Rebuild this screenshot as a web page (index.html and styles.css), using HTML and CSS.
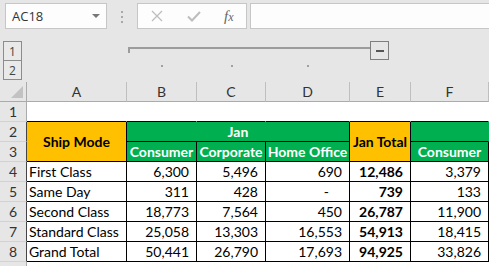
FILE: index.html
```html
<!DOCTYPE html>
<html lang="en">
<head>
<meta charset="UTF-8" />
<meta name="viewport" content="width=device-width, initial-scale=1" />
<title>Ship Mode by Segment</title>
<link rel="stylesheet" href="styles.css">
</head>
<body>
<div class="excel">
  <div class="formula-bar">
    <div class="name-box">AC18<span class="caret"></span></div>
    <div class="grip"><i></i><i></i><i></i></div>
    <div class="fx-buttons">
      <svg class="cancel" width="12" height="12" viewBox="0 0 12 12"><path d="M1 1 L11 11 M11 1 L1 11" /></svg>
      <svg class="enter" width="14" height="11" viewBox="0 0 14 11"><path d="M1 5.5 L5 9.5 L13 1" /></svg>
      <span class="fx"><i>f</i><i>x</i></span>
    </div>
    <div class="formula-input"></div>
  </div>

  <div class="outline">
    <div class="levels">
      <button>1</button>
      <button>2</button>
    </div>
    <div class="group-bar">
      <span class="group-line"></span>
      <span class="collapse"></span>
    </div>
    <span class="dot col-b"></span>
    <span class="dot col-c"></span>
    <span class="dot col-d"></span>
  </div>

  <div class="sheet">
    <!-- column headers -->
    <div class="corner"><span class="select-all"></span></div>
    <div class="ch">A</div>
    <div class="ch">B</div>
    <div class="ch">C</div>
    <div class="ch">D</div>
    <div class="ch">E</div>
    <div class="ch">F</div>

    <!-- row 1 -->
    <div class="rh">1</div>
    <div class="cell edge"></div>
    <div class="cell edge"></div>
    <div class="cell edge"></div>
    <div class="cell edge"></div>
    <div class="cell edge"></div>
    <div class="cell edge"></div>

    <!-- rows 2-3: headers -->
    <div class="rh in-table">2</div>
    <div class="cell t hdr gold span-rows">Ship Mode</div>
    <div class="cell t hdr green span-three">Jan</div>
    <div class="cell t hdr gold span-rows">Jan Total</div>
    <div class="cell t hdr green open"></div>

    <div class="rh in-table">3</div>
    <div class="cell t hdr green">Consumer</div>
    <div class="cell t hdr green">Corporate</div>
    <div class="cell t hdr green">Home Office</div>
    <div class="cell t hdr green">Consumer</div>

    <!-- data -->
    <div class="rh in-table">4</div>
    <div class="cell t">First Class</div>
    <div class="cell t num">6,300</div>
    <div class="cell t num">5,496</div>
    <div class="cell t num">690</div>
    <div class="cell t num bold">12,486</div>
    <div class="cell t num">3,379</div>

    <div class="rh in-table">5</div>
    <div class="cell t">Same Day</div>
    <div class="cell t num">311</div>
    <div class="cell t num">428</div>
    <div class="cell t num dash">-</div>
    <div class="cell t num bold">739</div>
    <div class="cell t num">133</div>

    <div class="rh in-table">6</div>
    <div class="cell t">Second Class</div>
    <div class="cell t num">18,773</div>
    <div class="cell t num">7,564</div>
    <div class="cell t num">450</div>
    <div class="cell t num bold">26,787</div>
    <div class="cell t num">11,900</div>

    <div class="rh in-table">7</div>
    <div class="cell t">Standard Class</div>
    <div class="cell t num">25,058</div>
    <div class="cell t num">13,303</div>
    <div class="cell t num">16,553</div>
    <div class="cell t num bold">54,913</div>
    <div class="cell t num">18,415</div>

    <div class="rh in-table">8</div>
    <div class="cell t">Grand Total</div>
    <div class="cell t num">50,441</div>
    <div class="cell t num">26,790</div>
    <div class="cell t num">17,693</div>
    <div class="cell t num bold">94,925</div>
    <div class="cell t num">33,826</div>

    <div class="rh"></div>
    <div class="cell"></div>
    <div class="cell"></div>
    <div class="cell"></div>
    <div class="cell"></div>
    <div class="cell"></div>
    <div class="cell"></div>
  </div>
</div>
</body>
</html>
```

FILE: styles.css
```css
:root {
  --chrome-bg: #e6e6e6;
  --box-border: #c6c6c6;
  --header-line: #bfbfbf;
  --header-edge: #ababab;
  --gold: #ffc000;
  --green: #00b050;
  --cell-font: Lato, 'Liberation Sans', sans-serif;
  --ui-font: 'Open Sans', 'Noto Sans', sans-serif;
}

* {
  box-sizing: border-box;
}

html,
body {
  margin: 0;
  overflow: hidden;
}

body {
  background: var(--chrome-bg);
  font-family: var(--cell-font);
  color: #000;
}

.excel {
  width: 489px;
  height: 266px;
  overflow: hidden;
}

/* formula bar */

.formula-bar {
  display: flex;
  align-items: flex-start;
  height: 31px;
  padding: 3px 0 0 5px;
}

.name-box {
  display: flex;
  align-items: center;
  width: 102px;
  height: 26px;
  padding-left: 6px;
  background: #fdfdfd;
  border: 1px solid var(--box-border);
  font-family: var(--ui-font);
  font-size: 13px;
  color: #333;
}

.caret {
  margin-left: auto;
  margin-right: 6px;
  width: 0;
  height: 0;
  border-left: 4px solid transparent;
  border-right: 4px solid transparent;
  border-top: 4px solid #777;
}

.grip {
  display: flex;
  flex-direction: column;
  gap: 3px;
  margin: 8px 14px 0 14px;
}

.grip i {
  display: block;
  width: 2px;
  height: 2px;
  background: #a8a8a8;
}

.fx-buttons {
  display: flex;
  align-items: center;
  width: 110px;
  height: 26px;
  padding-left: 13px;
  background: #fdfdfd;
  border: 1px solid var(--box-border);
}

.fx-buttons svg {
  fill: none;
  stroke: #bdbdbd;
}

.cancel {
  stroke-width: 1.3;
}

.enter {
  margin-left: 24px;
  stroke-width: 2;
}

.fx {
  margin-left: 23px;
  font-family: 'Liberation Serif', serif;
  font-size: 15px;
  color: #666;
}

.fx i + i {
  font-size: 12px;
}

.formula-input {
  flex: 1;
  height: 26px;
  margin: 0 -2px 0 3px;
  background: #fdfdfd;
  border: 1px solid var(--box-border);
}

/* outline groups */

.outline {
  display: grid;
  grid-template-columns: 27px 100px 70px 69px 84px 61px 78px;
  grid-template-rows: 30px 21px;
  height: 51px;
}

.levels {
  grid-row: 1 / 3;
  display: flex;
  flex-direction: column;
  padding: 10px 0 0 3px;
}

.levels button {
  width: 19px;
  height: 20px;
  margin: 0;
  padding: 0;
  background: #e9e9e9;
  border: 1px solid #8c8c8c;
  font-family: var(--ui-font);
  font-size: 12px;
  color: #444;
  line-height: 17px;
}

.levels button + button {
  margin-top: -1px;
}

.group-bar {
  grid-column: 3 / 7;
  display: flex;
  align-items: flex-start;
  margin: 10px 22px 0 1px;
}

.group-line {
  flex: 1;
  height: 6px;
  margin-top: 6px;
  border-top: 2px solid #9c9c9c;
  border-left: 2px solid #9c9c9c;
}

.collapse {
  position: relative;
  width: 19px;
  height: 19px;
  border: 1px solid #7f7f7f;
}

.collapse::after {
  content: '';
  position: absolute;
  left: 5px;
  top: 8px;
  width: 8px;
  height: 2px;
  background: #555;
}

.dot {
  grid-row: 2;
  justify-self: center;
  width: 2px;
  height: 2px;
  margin-top: 4px;
  background: #a0a0a0;
}

.col-b { grid-column: 3; }
.col-c { grid-column: 4; }
.col-d { grid-column: 5; }

/* sheet */

.sheet {
  display: grid;
  grid-template-columns: 27px 100px 70px 69px 84px 61px 78px;
  grid-auto-rows: 20px;
  font-size: 14px;
}

.corner,
.ch,
.rh {
  display: flex;
  align-items: center;
  justify-content: center;
  background: var(--chrome-bg);
  color: #333;
}

.corner {
  position: relative;
  border-right: 1px solid var(--header-edge);
  border-bottom: 1px solid var(--header-edge);
}

.select-all {
  position: absolute;
  right: 3px;
  bottom: 3px;
  width: 0;
  height: 0;
  border-left: 12px solid transparent;
  border-bottom: 12px solid #c2c2c2;
}

.ch {
  border-right: 1px solid var(--header-line);
  border-bottom: 1px solid var(--header-edge);
}

.rh {
  border-right: 1px solid var(--header-edge);
  border-bottom: 1px solid #d2d2d2;
}

.rh.in-table {
  border-right-color: #444;
}

.cell {
  display: flex;
  align-items: center;
  padding: 0 2px;
  background: #fff;
  border-right: 1px solid #fff;
  border-bottom: 1px solid #fff;
  white-space: nowrap;
  overflow: hidden;
}

.cell.edge {
  border-bottom-color: #000;
}

.cell.t {
  border-right-color: #000;
  border-bottom-color: #000;
}

.num {
  justify-content: flex-end;
  padding-right: 7px;
}

.num.dash {
  padding-right: 20px;
}

.bold,
.hdr {
  font-weight: bold;
}

.hdr {
  justify-content: center;
}

.gold {
  background: var(--gold);
}

.green {
  background: var(--green);
  color: #fff;
}

.span-rows {
  grid-row: span 2;
}

.span-three {
  grid-column: span 3;
}

.cell.open {
  border-right-color: var(--green);
}
```
